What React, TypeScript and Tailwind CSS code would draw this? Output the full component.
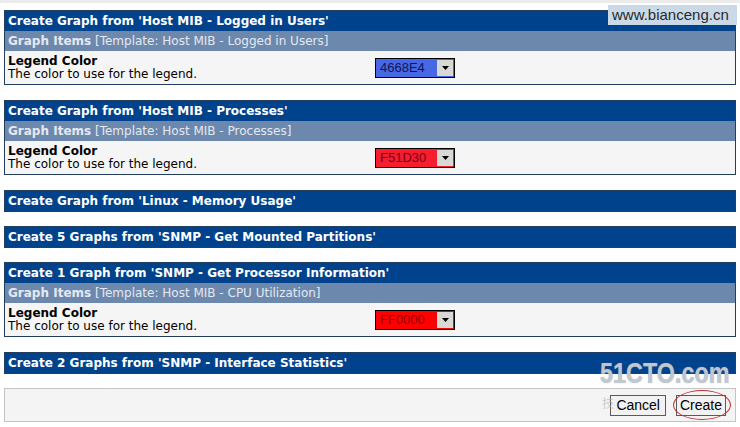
import React from "react"

type Item = {
  title: string
  template?: string
  color?: string
  bg?: string
  fg?: string
}

const items: Item[] = [
  {
    title: "Create Graph from 'Host MIB - Logged in Users'",
    template: "Host MIB - Logged in Users",
    color: "4668E4",
    bg: "bg-[#4668e4]",
    fg: "text-[#14145a]",
  },
  {
    title: "Create Graph from 'Host MIB - Processes'",
    template: "Host MIB - Processes",
    color: "F51D30",
    bg: "bg-[#f51d30]",
    fg: "text-[#7a0010]",
  },
  { title: "Create Graph from 'Linux - Memory Usage'" },
  { title: "Create 5 Graphs from 'SNMP - Get Mounted Partitions'" },
  {
    title: "Create 1 Graph from 'SNMP - Get Processor Information'",
    template: "Host MIB - CPU Utilization",
    color: "FF0000",
    bg: "bg-[#ff0000]",
    fg: "text-[#8a0000]",
  },
  { title: "Create 2 Graphs from 'SNMP - Interface Statistics'" },
]

const ColorSelect = ({ item }: { item: Item }) => (
  <div className={`flex h-[20px] w-[80px] items-stretch border border-black ${item.bg}`}>
    <span className={`flex-1 pl-[4px] text-[13px] leading-[18px] ${item.fg} font-['Liberation_Sans',sans-serif]`}>
      {item.color}
    </span>
    <span className="my-[1px] mr-[1px] flex w-[16px] items-center justify-center bg-[#d8d8d4]">
      <svg width="7" height="4" viewBox="0 0 7 4">
        <path d="M0 0h7L3.5 4z" fill="#000" />
      </svg>
    </span>
  </div>
)

const Block = ({ item }: { item: Item }) => (
  <div className={`border border-[#233f60] ${item.template ? "mb-[15px]" : "mb-[14px]"}`}>
    <div className="h-[20px] bg-[#00438c] pl-[3px] text-[12px] font-bold leading-[20px] text-white">
      {item.title}
    </div>
    {item.template && (
      <>
        <div className="h-[20px] bg-[#6d88ad] pl-[3px] text-[12px] leading-[20px] text-[#e4e9f1]">
          <span className="font-bold">Graph Items</span> [Template: {item.template}]
        </div>
        <div className="flex h-[33px] items-center bg-[#f5f5f5] pl-[3px]">
          <div className="w-[367px] text-[12px] leading-[13px] text-black">
            <div className="font-bold">Legend Color</div>
            <div>The color to use for the legend.</div>
          </div>
          <ColorSelect item={item} />
        </div>
      </>
    )}
  </div>
)

export default function App() {
  return (
    <div className="relative h-[427px] w-[740px] overflow-hidden bg-white font-['DejaVu_Sans',Verdana,sans-serif]">
      <div className="h-[3px] bg-[#ececec]" />

      <div className="px-[4px] pt-[7px]">
        {items.map((item) => (
          <Block key={item.title} item={item} />
        ))}
        <div className="flex h-[34px] items-center justify-end gap-[10px] border border-[#c4c4c4] bg-[#f4f4f4] pr-[9px] font-['Liberation_Sans',sans-serif]">
          <button className="h-[21px] border border-[#5a5a5a] bg-[#f2f2f2] px-[5px] text-[14px] leading-[18px] text-black">
            Cancel
          </button>
          <div className="relative">
            <button className="h-[21px] border border-[#5a5a5a] bg-[#f2f2f2] px-[3px] text-[14px] leading-[18px] text-black">
              Create
            </button>
            <div className="pointer-events-none absolute -bottom-[3px] -left-[3px] -right-[5px] -top-[3px] rounded-[50%] border border-[#c03030]" />
          </div>
        </div>
      </div>

      {/* watermarks */}
      <div className="pointer-events-none absolute left-[600px] top-[358px] origin-left scale-x-[0.78] text-[30px] font-bold leading-[30px] text-[#d6dae0]/80 [text-shadow:0_0_1px_#7d8590] font-['Liberation_Sans',sans-serif]">
        51CTO.com
      </div>
      <div className="pointer-events-none absolute left-[602px] top-[396px] text-[12px] leading-[14px] text-[#b0b0b0]/60 font-['Noto_Sans_CJK_SC',sans-serif]">
        技
      </div>
      <div className="absolute left-[608px] top-[5px] h-[20px] w-[129px] bg-[#c9d9e8] pl-[4px] font-['Liberation_Sans',sans-serif] text-[15px] leading-[20px] text-[#2a2a2a]">
        www.bianceng.cn
      </div>
    </div>
  )
}
